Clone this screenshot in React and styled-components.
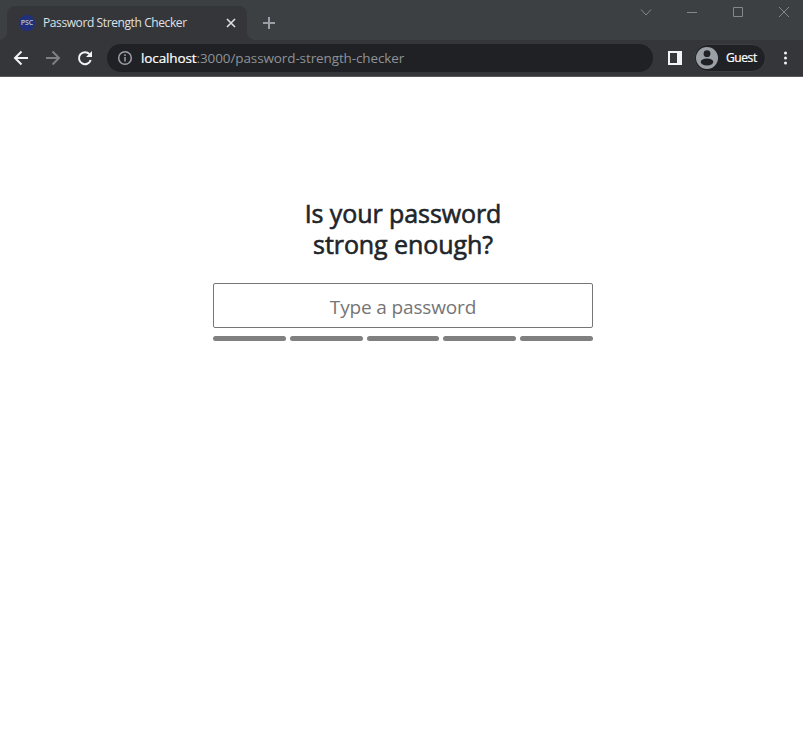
import React from "react";
import styled, { createGlobalStyle } from "styled-components";

const GlobalStyle = createGlobalStyle`
  * { box-sizing: border-box; }
  body { margin: 0; background: #fff; overflow: hidden; font-family: "Open Sans", "Noto Sans", sans-serif; }
`;

const Window = styled.div`
  display: flex;
  flex-direction: column;
  height: 742px;
  background: #fff;
`;

const TabStrip = styled.div`
  display: flex;
  align-items: flex-start;
  height: 40px;
  padding-left: 7px;
  background: #3c4043;
`;

const Tab = styled.div`
  position: relative;
  display: flex;
  align-items: center;
  width: 240px;
  height: 34px;
  margin-top: 6px;
  padding: 0 9px 0 12px;
  border-radius: 8px 8px 0 0;
  background: #35363a;

  &::before,
  &::after {
    content: "";
    position: absolute;
    bottom: 0;
    width: 8px;
    height: 8px;
  }
  &::before {
    left: -8px;
    background: radial-gradient(circle at 0 0, transparent 7.5px, #35363a 8px);
  }
  &::after {
    right: -8px;
    background: radial-gradient(circle at 100% 0, transparent 7.5px, #35363a 8px);
  }
`;

const Favicon = styled.span`
  display: flex;
  align-items: center;
  justify-content: center;
  width: 16px;
  height: 16px;
  border-radius: 50%;
  background: #20307c;
  color: #b9c9c9;
  font-size: 7px;
  font-weight: 600;
  line-height: 16px;
  letter-spacing: -0.1px;
`;

const TabTitle = styled.span`
  flex: 1;
  margin-left: 8px;
  color: #dfe1e5;
  font-size: 12px;
  line-height: 16px;
  letter-spacing: -0.4px;
  white-space: nowrap;
`;

const Icon = styled.svg`
  display: block;
  flex: none;
  fill: none;
  stroke: ${(p) => p.$color};
  stroke-width: ${(p) => p.$weight || 1};
`;

const NewTab = styled.div`
  margin: 17px 0 0 16px;
`;

const WindowControls = styled.div`
  display: flex;
  gap: 34px;
  margin: 6px 13px 0 auto;
`;

const Toolbar = styled.div`
  display: flex;
  align-items: center;
  height: 37px;
  padding: 0 10px 0 13px;
  border-bottom: 1px solid #58595d;
  background: #35363a;
`;

const NavButtons = styled.div`
  display: flex;
  gap: 16px;
`;

const AddressBar = styled.div`
  display: flex;
  align-items: center;
  flex: 1;
  height: 28px;
  margin: 0 14px;
  padding-left: 10px;
  border-radius: 14px;
  background: #202124;
`;

const Url = styled.span`
  margin-left: 8px;
  color: #8e9297;
  font-size: 13.5px;
  line-height: 18px;
  letter-spacing: -0.11px;
  white-space: nowrap;
`;

const Host = styled.span`
  color: #fff;
  -webkit-text-stroke: 0.2px #fff;
`;

const Profile = styled.div`
  display: flex;
  align-items: center;
  width: 72px;
  height: 28px;
  margin: 0 11px;
  padding-left: 1px;
  border: 1px solid #3d3e42;
  border-radius: 14px;
  background: #202124;
`;

const ProfileName = styled.span`
  margin-left: 8px;
  color: #fff;
  font-size: 12px;
  -webkit-text-stroke: 0.2px #fff;
  line-height: 16px;
  letter-spacing: -0.4px;
`;

const Page = styled.main`
  display: flex;
  flex-direction: column;
  width: 380px;
  margin: 121px 0 0 213px;
`;

const Heading = styled.h1`
  margin: 0;
  color: #212529;
  font-size: 25px;
  font-weight: 400;
  -webkit-text-stroke: 0.6px #212529;
  line-height: 31px;
  letter-spacing: -0.08px;
  text-align: center;
`;

const PasswordInput = styled.input`
  width: 100%;
  height: 45px;
  margin-top: 23px;
  padding: 3px 0 0;
  border: 1px solid #767676;
  border-radius: 2px;
  outline: none;
  background: #fff;
  color: #212529;
  font-family: inherit;
  font-size: 19px;
  letter-spacing: -0.15px;
  text-align: center;
  &::placeholder { color: #757575; opacity: 1; }
`;

const StrengthMeter = styled.div`
  display: grid;
  grid-template-columns: repeat(5, 1fr);
  gap: 4px;
  margin-top: 8px;
`;

const Segment = styled.span`
  height: 5px;
  border-radius: 3px;
  background: #808080;
`;

export default function App() {
  return (
    <Window>
      <GlobalStyle />
      <TabStrip>
        <Tab>
          <Favicon>PSC</Favicon>
          <TabTitle>Password Strength Checker</TabTitle>
          <Icon width="14" height="14" $color="#dfe1e5" $weight="1.6">
            <path d="M3 3l8 8M11 3l-8 8" />
          </Icon>
        </Tab>
        <NewTab>
          <Icon width="12" height="12" $color="#9aa0a6" $weight="2">
            <path d="M6 0v12M0 6h12" />
          </Icon>
        </NewTab>
        <WindowControls>
          <Icon width="12" height="12" $color="#85888a"><path d="M1 3.5l5 5.5 5-5.5" /></Icon>
          <Icon width="12" height="12" $color="#85888a"><path d="M1 6.5h10" /></Icon>
          <Icon width="12" height="12" $color="#85888a"><path d="M1.5 1.5h9v9h-9z" /></Icon>
          <Icon width="12" height="12" $color="#85888a"><path d="M1 1l10 10M11 1L1 11" /></Icon>
        </WindowControls>
      </TabStrip>
      <Toolbar>
        <NavButtons>
          <Icon width="16" height="16" $color="#f1f3f4" $weight="2">
            <path d="M15 8H2.5M8.5 1.5L2 8l6.5 6.5" />
          </Icon>
          <Icon width="16" height="16" $color="#7e7f82" $weight="2">
            <path d="M1 8h12.5M7.5 1.5L14 8l-6.5 6.5" />
          </Icon>
          <Icon width="16" height="16" $color="#f1f3f4" $weight="2">
            <path d="M12.5 4.2A6 6 0 1 0 13.7 10" />
            <path d="M15 1v6H9z" fill="#f1f3f4" stroke="none" />
          </Icon>
        </NavButtons>
        <AddressBar>
          <Icon width="16" height="16" $color="#9aa0a6" $weight="1.5">
            <circle cx="8" cy="8" r="6.3" />
            <path d="M8 7v4.5M8 4.3v1.6" />
          </Icon>
          <Url><Host>localhost</Host>:3000/password-strength-checker</Url>
        </AddressBar>
        <Icon width="16" height="16" $color="#f1f3f4" $weight="2">
          <path d="M2 2h12v12H2z" />
          <path d="M10 1h5v14h-5z" fill="#f1f3f4" stroke="none" />
        </Icon>
        <Profile>
          <Icon width="22" height="22" $color="none">
            <circle cx="11" cy="11" r="11" fill="#9aa0a6" />
            <circle cx="11" cy="6.7" r="3.4" fill="#202124" />
            <ellipse cx="11" cy="15" rx="6.3" ry="3.4" fill="#202124" />
          </Icon>
          <ProfileName>Guest</ProfileName>
        </Profile>
        <Icon width="16" height="16" $color="none">
          <circle cx="8.5" cy="3" r="1.5" fill="#f1f3f4" />
          <circle cx="8.5" cy="8" r="1.5" fill="#f1f3f4" />
          <circle cx="8.5" cy="13" r="1.5" fill="#f1f3f4" />
        </Icon>
      </Toolbar>
      <Page>
        <Heading>Is your password<br />strong enough?</Heading>
        <PasswordInput type="password" placeholder="Type a password" />
        <StrengthMeter>
          {[1, 2, 3, 4, 5].map((level) => <Segment key={level} />)}
        </StrengthMeter>
      </Page>
    </Window>
  );
}
